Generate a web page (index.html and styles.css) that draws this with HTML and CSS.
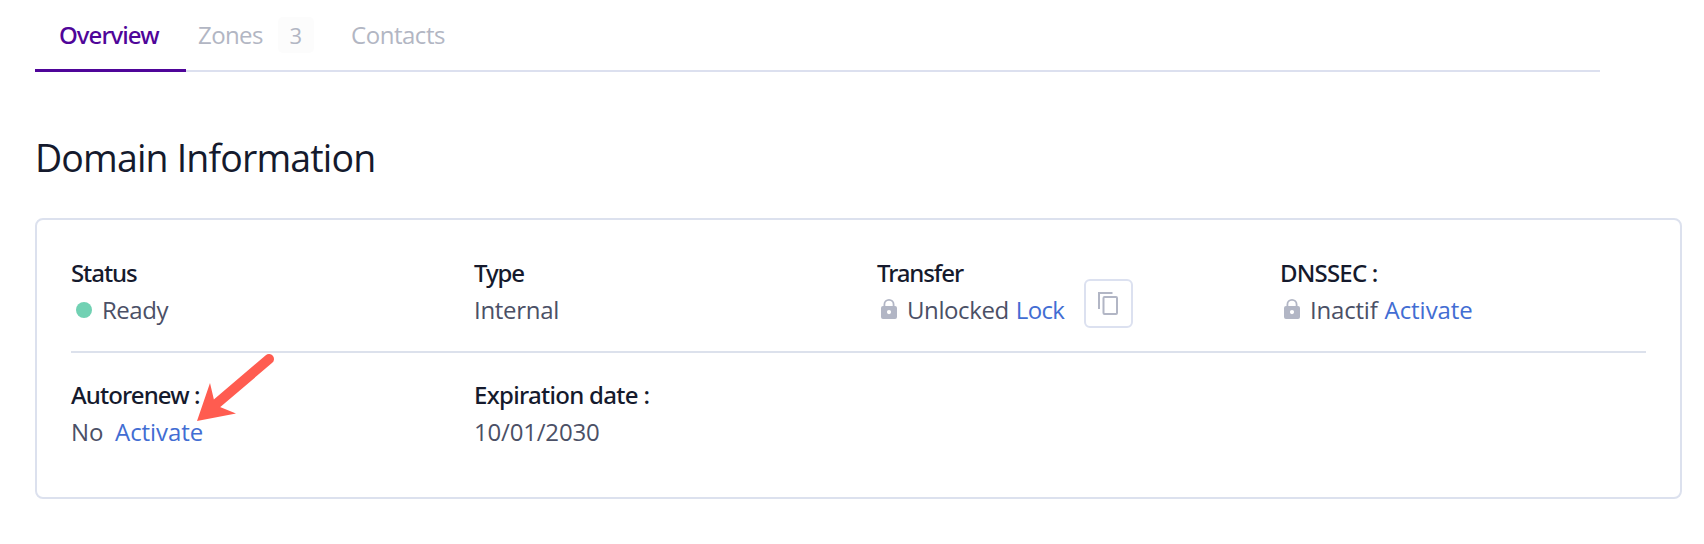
FILE: index.html
```
<!DOCTYPE html>
<html lang="en">
<head>
<meta charset="utf-8">
<title>Domain Information</title>
<link rel="stylesheet" href="styles.css">
</head>
<body>
<nav class="tabs">
  <div class="tab active"><span class="w-overview">Overview</span></div>
  <div class="tab zones"><span class="w-zones">Zones</span><span class="count">3</span></div>
  <div class="tab contacts"><span class="w-contacts">Contacts</span></div>
</nav>
<h1 class="title">Domain Information</h1>
<section class="card">
  <div class="row">
    <div class="cell">
      <div class="label w-status">Status</div>
      <div class="value"><i class="dot"></i><span class="w-ready">Ready</span></div>
    </div>
    <div class="cell">
      <div class="label w-type">Type</div>
      <div class="value w-internal">Internal</div>
    </div>
    <div class="cell transfer">
      <div>
        <div class="label w-transfer">Transfer</div>
        <div class="value">
          <svg class="lock" viewBox="0 0 16 20"><path fill-rule="evenodd" d="M2.500 7V5.500a5.500 5.500 0 0 1 11 0V7H14a2 2 0 0 1 2 2v9a2 2 0 0 1-2 2H2a2 2 0 0 1-2-2V9a2 2 0 0 1 2-2zM4.300 7h7.400V5.500a3.700 3.700 0 0 0-7.400 0zM8 11a2.100 2.100 0 1 0 0 4.200A2.100 2.100 0 0 0 8 11z"/></svg>
          <span class="w-unlocked">Unlocked</span><a class="link lock-link">Lock</a>
        </div>
      </div>
      <button class="copy"><svg viewBox="0 0 20 24"><path d="M1 17V1h13.500"/><rect x="5.500" y="5" width="13.500" height="17" rx="1"/></svg></button>
    </div>
    <div class="cell">
      <div class="label w-dnssec">DNSSEC :</div>
      <div class="value">
        <svg class="lock" viewBox="0 0 16 20"><path fill-rule="evenodd" d="M2.500 7V5.500a5.500 5.500 0 0 1 11 0V7H14a2 2 0 0 1 2 2v9a2 2 0 0 1-2 2H2a2 2 0 0 1-2-2V9a2 2 0 0 1 2-2zM4.300 7h7.400V5.500a3.700 3.700 0 0 0-7.400 0zM8 11a2.100 2.100 0 1 0 0 4.200A2.100 2.100 0 0 0 8 11z"/></svg>
        <span class="w-inactif">Inactif</span><a class="link dnssec-link">Activate</a>
      </div>
    </div>
  </div>
  <div class="row second">
    <div class="cell">
      <div class="label w-autorenew">Autorenew :</div>
      <div class="value"><span class="no">No</span><a class="link renew-link">Activate</a></div>
    </div>
    <div class="cell">
      <div class="label w-expiration">Expiration date :</div>
      <div class="value w-date">10/01/2030</div>
    </div>
  </div>
  <svg class="arrow" viewBox="0 0 80 70"><path d="M72 6 18 52" stroke="#ff5c50" stroke-width="10" stroke-linecap="round"/><path d="M0 68 13 30 17 47 23 54 39 60.500z" fill="#ff5c50"/></svg>
</section>
</body>
</html>
```
FILE: styles.css
```
* { box-sizing: border-box; }
body {
  margin: 0;
  height: 544px;
  overflow: hidden;
  background: #fff;
  font-family: "Open Sans", "Noto Sans", sans-serif;
  font-size: 24px;
}
.tabs {
  display: flex;
  width: 1565px;
  height: 72px;
  margin-left: 35px;
  color: #b2b6c3;
  background: linear-gradient(#dce0ef, #dce0ef) bottom / 100% 2px no-repeat;
}
.tab { height: 72px; line-height: 70px; white-space: nowrap; }
.active {
  width: 151px;
  padding-left: 24px;
  border-bottom: 3px solid #4f0599;
  font-family: "Noto Sans", sans-serif;
  font-weight: 500;
  color: #4f0599;
}
.zones { display: flex; width: 165px; padding-left: 12px; }
.count {
  width: 36px;
  height: 36px;
  margin: 17px 0 0 15px;
  border-radius: 5px;
  background: #fcfcfc;
  font-size: 22px;
  line-height: 37px;
  text-align: center;
}
.title {
  margin: 57px 0 0 35px;
  height: 60px;
  font-size: 37.5px;
  line-height: 57px;
  font-weight: 400;
  letter-spacing: -.84px;
  color: #151a2d;
}
.card {
  position: relative;
  width: 1647px;
  height: 281px;
  margin: 29px 0 0 35px;
  padding: 34px 34px 0;
  border: 2px solid #dce1ee;
  border-radius: 8px;
}
.row { display: grid; grid-template-columns: repeat(4, 403px); }
.row:first-of-type {
  width: 1575px;
  height: 99px;
  border-bottom: 2px solid #dce1ec;
}
.second { padding-top: 23px; }
.label {
  height: 37px;
  font-family: "Noto Sans", sans-serif;
  font-weight: 500;
  line-height: 37px;
  color: #151a2d;
  white-space: nowrap;
}
.value {
  display: flex;
  height: 37px;
  line-height: 37px;
  color: #4b5066;
  white-space: nowrap;
}
.link { color: #426dd3; }
.dot {
  width: 16px;
  height: 16px;
  margin: 11px 10px 0 5px;
  border-radius: 50%;
  background: #71d1b3;
}
.lock {
  width: 16px;
  height: 20px;
  margin: 8px 10px 0 4px;
  fill: #b2b6c5;
}
.transfer { display: flex; }
.copy {
  display: flex;
  align-items: flex-start;
  width: 49px;
  height: 49px;
  margin: 25px 0 0 20px;
  padding: 11px 0 0 12px;
  border: 2px solid #dce1f0;
  border-radius: 6px;
  background: #fff;
}
.copy svg {
  width: 20px;
  height: 24px;
  fill: none;
  stroke: #b2b6c5;
  stroke-width: 2;
}
.arrow {
  position: absolute;
  left: 160px;
  top: 133px;
  width: 80px;
  height: 70px;
  fill: none;
}
.w-overview { letter-spacing: -.95px; }
.w-zones { letter-spacing: -.6px; }
.w-contacts { letter-spacing: -.46px; }
.w-status { letter-spacing: -1.08px; }
.w-ready { letter-spacing: -.47px; }
.w-type { letter-spacing: -1.1px; }
.w-internal { letter-spacing: -.3px; }
.w-transfer { letter-spacing: -1.12px; }
.w-unlocked { letter-spacing: -.4px; }
.lock-link { margin-left: 7px; letter-spacing: -.67px; }
.w-dnssec { letter-spacing: -.8px; }
.w-inactif { letter-spacing: -.2px; }
.dnssec-link { margin-left: 7px; letter-spacing: -.05px; }
.w-autorenew { letter-spacing: -.9px; }
.no { width: 44px; }
.renew-link { letter-spacing: -.05px; }
.w-expiration { letter-spacing: -.7px; }
.w-date { letter-spacing: -.19px; }
```
